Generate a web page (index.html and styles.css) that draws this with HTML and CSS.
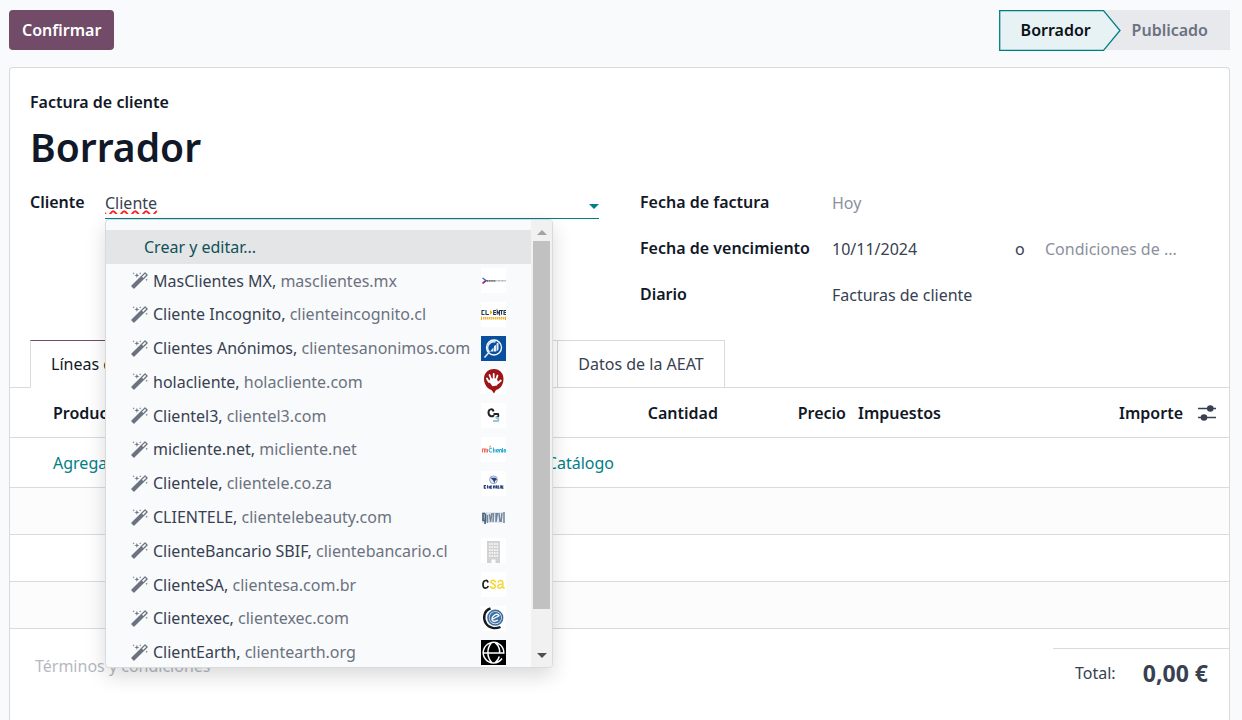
FILE: index.html
```html
<!DOCTYPE html>
<html lang="es">
<head>
<meta charset="utf-8">
<meta name="viewport" content="width=device-width, initial-scale=1">
<title>Factura de cliente</title>
<link rel="stylesheet" href="styles.css">
</head>
<body>
<svg class="defs" aria-hidden="true">
  <symbol id="wand" viewBox="0 0 1664 1664"><path d="M1190 581l293-293-107-107-293 293zm447-293q0 27-18 45l-1286 1286q-18 18-45 18t-45-18l-198-198q-18-18-18-45t18-45l1286-1286q18-18 45-18t45 18l198 198q18 18 18 45zm-1351-190l98 30-98 30-30 98-30-98-98-30 98-30 30-98zm350 162l196 60-196 60-60 196-60-196-196-60 196-60 60-196zm930 478l98 30-98 30-30 98-30-98-98-30 98-30 30-98zm-640-640l98 30-98 30-30 98-30-98-98-30 98-30 30-98z"/></symbol>
</svg>
<header class="control-bar">
  <button class="btn-primary" type="button">Confirmar</button>
  <div class="status">
    <button class="status-step is-current" type="button">
      <svg class="status-shape" width="122" height="41" viewBox="0 0 122 41" aria-hidden="true"><path d="M.7.7H104.500L121 20.500 104.500 40.300H.7z" fill="#e6f2f3" stroke="#017e84" stroke-width="1.300"/></svg>
      <span class="status-text">Borrador</span>
    </button>
    <button class="status-step" type="button">Publicado</button>
  </div>
</header>
<main class="sheet">
  <div class="sheet-top">
    <div class="doc-type">Factura de cliente</div>
    <h1 class="doc-title">Borrador</h1>
    <div class="fields">
      <div class="field-group customer-group">
        <label class="label" for="customer">Cliente</label>
        <div class="combo">
          <input class="combo-input" id="customer" type="text" value="Cliente" spellcheck="false" autocomplete="off">
          <svg class="combo-caret" width="10" height="5" viewBox="0 0 10 5" aria-hidden="true"><path d="M0 0h10L5 5z" fill="#017e84"/></svg>
          <div class="menu">
            <ul class="menu-list">
              <li><a class="option is-create" href="#">Crear y editar...</a></li>
              <li><a class="option" href="#"><svg class="wand"><use href="#wand"/></svg><span>MasClientes MX, <span class="site">masclientes.mx</span></span>
                <svg class="logo" viewBox="0 0 25 25"><path fill="#fff" d="M0 0h25v25H0z"/><path d="M1.500 10l3.500 2.500-3 2.500" fill="none" stroke="#2878b5" stroke-width="1.500"/><path d="M5 12.500l-3.500 3" stroke="#b5128c" stroke-width="1.600"/><path d="M5.500 12.800H14" stroke="#666" stroke-width="1.800" stroke-dasharray="1.500 .4"/><path d="M14 12.800h11" stroke="#aaa" stroke-width="1.500" stroke-dasharray="1 .4"/></svg></a></li>
              <li><a class="option" href="#"><svg class="wand"><use href="#wand"/></svg><span>Cliente Incognito, <span class="site">clienteincognito.cl</span></span>
                <svg class="logo" viewBox="0 0 25 25"><path fill="#fff" d="M0 0h25v25H0z"/><path d="M3.500 8.500H1v4h2.500M5 8v4.500h3M15 8.500h-2.300v4H15M12.700 10.500H15M16.200 12.800V8.500l2.300 4V8M19 8.500h3M20.500 8.500v4.300M25 8.500h-2v4h2M23 10.500h2" fill="none" stroke="#26384f" stroke-width="1.100"/><path d="M9 8l2.500 2.300L9 13z" fill="#f5a81c"/><path d="M.5 14.500v3.500M24.500 14.500v3.500" stroke="#f5a81c"/><path d="M2 16.200h22" stroke="#f5b73c" stroke-width="2.400" stroke-dasharray="1.500 .5"/></svg></a></li>
              <li><a class="option" href="#"><svg class="wand"><use href="#wand"/></svg><span>Clientes Anónimos, <span class="site">clientesanonimos.com</span></span>
                <svg class="logo" viewBox="0 0 25 25"><path fill="#0a4f9e" d="M0 0h25v25H0z"/><circle cx="13" cy="11.500" r="7.500" fill="none" stroke="#fff" stroke-width="1.300"/><path d="M8.500 16a6 6 0 0 1 6-10M7.500 17l-4 4.500" fill="none" stroke="#dfeaf6" stroke-width="1.600"/><path d="M9 15.500l3.500-4v4zM13 15.500v-5.500l2-1v6.500zM15.500 15.500V7.500l2-1v7z" fill="#e5eef8"/></svg></a></li>
              <li><a class="option" href="#"><svg class="wand"><use href="#wand"/></svg><span>holacliente, <span class="site">holacliente.com</span></span>
                <svg class="logo" viewBox="0 0 25 25"><path fill="#fff" d="M0 0h25v25H0z"/><path d="M13 0C6.500 0 3 4.500 3 10c0 6 4 10 7.500 11l2.500 3.500 2-3.500C19 20 22.500 16 22.500 10 22.500 4.500 19 0 13 0z" fill="#9d1519"/><path d="M8 13L5.900 9.500M10.500 11L8.500 6M12.700 10.500V5M15 11l1.500-4.500M17 14l2.800-2.500" stroke="#fff" stroke-width="1.800" stroke-linecap="round"/><path d="M7.500 12l2.500-2.500h5.500l2 4-1.500 3-4.500.8z" fill="#fff"/></svg></a></li>
              <li><a class="option" href="#"><svg class="wand"><use href="#wand"/></svg><span>Clientel3, <span class="site">clientel3.com</span></span>
                <svg class="logo" viewBox="0 0 25 25"><path fill="#fff" d="M0 0h25v25H0z"/><path d="M12.500 8.500C12 5.500 7.500 5.500 7.500 9.500S12 14.500 12.800 12" fill="none" stroke="#222" stroke-width="2"/><path d="M12.500 11h4.500q1.500 3-2 3.500" fill="none" stroke="#222" stroke-width="1.800"/><path d="M14.500 14.500q4 0 2.500 3.500h-5" fill="none" stroke="#98c9d2" stroke-width="2"/></svg></a></li>
              <li><a class="option" href="#"><svg class="wand"><use href="#wand"/></svg><span>micliente.net, <span class="site">micliente.net</span></span>
                <svg class="logo" viewBox="0 0 25 25"><path fill="#fff" d="M0 0h25v25H0z"/><path d="M1.500 15.500v-3.500h2v3.500M3.500 12h1.500v3.500M6.500 12v3.500" fill="none" stroke="#f26a60" stroke-width="1.100"/><path d="M11 11.200q-3-.8-3 2t3 1.800M12.500 10.500v5M14 12v3.500M17.500 15H15.500v-2.500h2V14h-2M18.500 15.500v-3h2v3M21.500 11v4.500M25 15h-2v-2.500h1.500V14H23" fill="none" stroke="#32afd8" stroke-width="1"/><path d="M8 9.500h2" stroke="#f7b84b" stroke-width="1.500"/></svg></a></li>
              <li><a class="option" href="#"><svg class="wand"><use href="#wand"/></svg><span>Clientele, <span class="site">clientele.co.za</span></span>
                <svg class="logo" viewBox="0 0 25 25"><path fill="#fff" d="M0 0h25v25H0z"/><circle cx="12.500" cy="8.800" r="3.900" fill="#e3e9f3" stroke="#8498c0" stroke-width=".9"/><path d="M9.500 6.800h5l1.500 2-2 1-.5 2.500-1.500-3z" fill="#27407d"/><path d="M5 14.700H3.300v2.500H5M6.500 14.300v3.200M8.200 15v2.500M11 17.200H9.500v-2H11M12.500 17.500v-2.500h1.500v2.500M15.500 14.300v3.200M18.500 17.200H17v-2h1.200M19.800 14.300v3.200M22.500 17.200H21v-2h1.300" fill="none" stroke="#27407d" stroke-width="1.200"/></svg></a></li>
              <li><a class="option" href="#"><svg class="wand"><use href="#wand"/></svg><span>CLIENTELE, <span class="site">clientelebeauty.com</span></span>
                <svg class="logo" viewBox="0 0 25 25"><path fill="#e3e8ee" d="M1 7h23v11H1z"/><path d="M4 8.500H2v7h2.500V8.500L4 19" fill="none" stroke="#49617d" stroke-width="1.700"/><path d="M6.500 10v8M8.500 9l1 8 1.500-9M12.500 8l-.5 9M15 8v9l1.500-9M18 8l1 9M21 8l-1 9M23 7v11" fill="none" stroke="#71849a" stroke-width="1.400"/></svg></a></li>
              <li><a class="option" href="#"><svg class="wand"><use href="#wand"/></svg><span>ClienteBancario SBIF, <span class="site">clientebancario.cl</span></span>
                <svg class="logo" viewBox="0 0 25 25"><path fill="#fff" d="M0 0h25v25H0z"/><path d="M6 3h13v22h-4.500v-3.500h-4V25H6z" fill="#d2d2d2"/><path d="M8 6h9.500M8 9h9.500M8 12h9.500M8 15h9.500M8 18h9.500" stroke="#fff" stroke-width="1.600" stroke-dasharray="1.600 .9"/></svg></a></li>
              <li><a class="option" href="#"><svg class="wand"><use href="#wand"/></svg><span>ClienteSA, <span class="site">clientesa.com.br</span></span>
                <svg class="logo" viewBox="0 0 25 25"><path fill="#fff" d="M0 0h25v25H0z"/><path d="M7 10.500Q6.500 8 4.500 8.500 2 9 2 12.500t2.500 3.700Q6.500 16.200 7.300 14" fill="none" stroke="#222" stroke-width="1.700"/><path d="M14.500 10.500Q14 8.300 12 8.300q-2.500.3-2 2.200l4 2.500q1 3-1.800 3.200Q10 16.300 9.500 14" fill="none" stroke="#f4d737" stroke-width="1.500"/><path d="M17 10.500q.5-2.300 2.800-2.100 2 .1 2 2.300v4.500q.4 1 2 .6M21.500 12q-5 .3-4.700 2.600.4 2.500 3.200 1.300l1.500-1.500" fill="none" stroke="#f4d737" stroke-width="1.500"/></svg></a></li>
              <li><a class="option" href="#"><svg class="wand"><use href="#wand"/></svg><span>Clientexec, <span class="site">clientexec.com</span></span>
                <svg class="logo" viewBox="0 0 25 25"><path fill="#fff" d="M0 0h25v25H0z"/><path d="M9.500 2.500C3 4.500 1.500 12 5 17.500c3 5 9.500 5.500 14.500 3.500" fill="none" stroke="#171b20" stroke-width="2.400"/><circle cx="14.300" cy="11.700" r="7.300" fill="#fff" stroke="#3f6fa2" stroke-width="1.600"/><circle cx="14.300" cy="11.700" r="5.900" fill="#3f6fa2"/><path d="M11 13.500l7-3.700q-1.200-2.500-4-1-4 2.700-2.700 5.500 1.700 2 5.700-.3" fill="none" stroke="#fff" stroke-width="1.300"/></svg></a></li>
              <li><a class="option" href="#"><svg class="wand"><use href="#wand"/></svg><span>ClientEarth, <span class="site">clientearth.org</span></span>
                <svg class="logo" viewBox="0 0 25 25"><path d="M0 0h25v25H0z"/><path d="M21 18.500a10.300 10.300 0 1 1 1.800-5.500H2M11 2.300C5.500 8 5.500 17 11 22.800M14 2.300C18.500 6 19 11 18.500 13M14 22.800Q17.500 20 18.300 16.500" fill="none" stroke="#fff" stroke-width="1.500"/></svg></a></li>
            </ul>
            <div class="scrollbar" aria-hidden="true">
              <svg width="10" height="5" viewBox="0 0 10 5"><path d="M0 5h10L5 0z" fill="#a3a3a3"/></svg>
              <div class="scroll-track"><div class="scroll-thumb"></div></div>
              <svg width="10" height="5" viewBox="0 0 10 5"><path d="M0 0h10L5 5z" fill="#505050"/></svg>
            </div>
          </div>
        </div>
      </div>
      <div class="field-group dates-group">
        <label class="label" for="inv-date">Fecha de factura</label>
        <input class="value" id="inv-date" type="text" placeholder="Hoy">
        <label class="label" for="due-date">Fecha de vencimiento</label>
        <div class="due">
          <input class="value" id="due-date" type="text" value="10/11/2024">
          <span class="due-or">o</span>
          <input class="value" type="text" placeholder="Condiciones de ..." aria-label="Condiciones de pago">
        </div>
        <label class="label" for="journal">Diario</label>
        <input class="value" id="journal" type="text" value="Facturas de cliente">
      </div>
    </div>
  </div>
  <nav class="tabs">
    <button class="tab is-active" type="button">Líneas de factura</button>
    <button class="tab tab-wide" type="button">Apuntes contables</button>
    <button class="tab tab-wide" type="button">Otra información</button>
    <button class="tab" type="button">Datos de la AEAT</button>
  </nav>
  <table class="lines">
    <colgroup><col><col class="col-qty"><col class="col-price"><col class="col-tax"><col class="col-amount"><col class="col-opts"></colgroup>
    <thead>
      <tr>
        <th class="first">Producto</th><th class="num">Cantidad</th><th class="num">Precio</th><th>Impuestos</th><th class="num">Importe</th>
        <th><button class="opts" type="button" aria-label="Columnas"><svg width="18" height="16" viewBox="0 0 18 16"><path d="M0 3.500h18M0 12.500h18" stroke="#374151" stroke-width="1.400"/><circle cx="12.300" cy="3.500" r="3.300" fill="#374151"/><circle cx="6" cy="12.500" r="3.300" fill="#374151"/></svg></button></th>
      </tr>
    </thead>
    <tbody>
      <tr class="add-row"><td class="first" colspan="6"><div class="add-links"><a href="#">Agregar línea</a><a href="#">Agregar sección</a><a href="#">Agregar nota</a><a href="#">Catálogo</a></div></td></tr>
      <tr class="alt"><td colspan="6"></td></tr>
      <tr><td colspan="6"></td></tr>
      <tr class="alt"><td colspan="6"></td></tr>
    </tbody>
  </table>
  <div class="summary">
    <textarea class="terms" rows="1" placeholder="Términos y condiciones" aria-label="Términos y condiciones"></textarea>
    <div class="total"><span>Total:</span><strong class="total-value">0,00 €</strong></div>
  </div>
</main>
</body>
</html>
```

FILE: styles.css
```css
* { box-sizing: border-box; }
html { height: 100%; }
body {
  margin: 0;
  height: 100%;
  display: flex;
  flex-direction: column;
  overflow: hidden;
  background: #f9fafb;
  color: #374151;
  font: 16px/24px "Noto Sans", "Open Sans", sans-serif;
}
button, input, textarea { font: inherit; color: inherit; }
button { cursor: pointer; }
a { color: #017e84; text-decoration: none; }
.defs { position: absolute; width: 0; height: 0; }

.control-bar {
  display: flex;
  justify-content: space-between;
  align-items: center;
  padding: 10px 12px 17px 9px;
}
.btn-primary {
  height: 40px;
  padding: 0 13px;
  border: 0;
  border-radius: 4px;
  background: #714b67;
  color: #fff;
  font-weight: 600;
}
.status { display: flex; }
.status-step {
  position: relative;
  height: 40px;
  padding: 0 22px 0 28px;
  border: 0;
  background: #e7e9ed;
  color: #6b7280;
  font-weight: 600;
}
.status-step.is-current { width: 105px; padding: 0 0 0 22px; color: #0b1118; text-align: left; z-index: 1; }
.status-shape { position: absolute; left: 0; top: 0; }
.status-text { position: relative; }

.sheet {
  flex: 1 0 auto;
  margin: 0 12px 0 9px;
  border: 1px solid #d8dadd;
  border-bottom: 0;
  border-radius: 4px 4px 0 0;
  background: #fff;
}
.sheet-top { padding: 22px 20px 0; }
.doc-type { color: #111827; font-weight: 600; }
.doc-title { margin: 5px 0 0; color: #111827; font-size: 39px; line-height: 56px; font-weight: 600; }
.fields { display: grid; grid-template-columns: 569px 1fr; column-gap: 41px; margin-top: 12px; }
.field-group { display: grid; align-content: start; }
.customer-group { grid-template-columns: 75px 1fr; }
.dates-group { grid-template-columns: 192px 1fr; row-gap: 16px; }
.label { color: #111827; font-weight: 600; line-height: 30px; }
.value { width: 100%; height: 30px; padding: 2px 0 0; border: 0; background: none; outline: 0; }
.value::placeholder { color: #8b919c; opacity: 1; }
.due { display: grid; grid-template-columns: 183px 30px 150px; }
.due-or { line-height: 32px; height: 30px; }

.combo { position: relative; }
.combo-input {
  display: block;
  width: 100%;
  height: 32px;
  padding: 2px 20px 2px 0;
  border: 0;
  border-bottom: 1px solid #017e84;
  background: none;
  outline: 0;
  text-decoration: underline wavy #f22 2px;
  text-underline-offset: 1px;
}
.combo-caret { position: absolute; right: 0; top: 17px; }
.menu {
  position: absolute;
  left: 0;
  top: 32px;
  z-index: 5;
  width: 448px;
  height: 449px;
  display: flex;
  overflow: hidden;
  border: 1px solid #d8dadd;
  border-radius: 4px;
  background: #f9fafb;
  box-shadow: 0 8px 20px rgba(0, 0, 0, .15);
}
.menu-list {
  flex: 1;
  height: 449px;
  margin: 0;
  padding: 10px 0 0;
  list-style: none;
  display: grid;
  grid-template-rows: repeat(13, 1fr);
}
.option { display: flex; align-items: center; height: 100%; padding: 0 25px; color: #374151; white-space: nowrap; }
.option.is-create { padding-left: 38px; background: #e4e5e7; color: #0f5257; }
.site { color: #6b7280; }
.wand { width: 17px; height: 17px; margin-right: 5px; fill: #6b7280; }
.logo { width: 25px; height: 25px; margin-left: auto; }
.scrollbar { width: 21px; padding: 10px 0 9px; display: flex; flex-direction: column; align-items: center; gap: 6px; background: #f1f1f1; }
.scrollbar svg { flex: none; }
.scroll-track { flex: 1; width: 17px; }
.scroll-thumb { height: 368px; background: #c1c1c1; }

.tabs { display: flex; margin-top: 31px; padding-left: 20px; border-bottom: 1px solid #d8dadd; }
.tab {
  height: 48px;
  margin-bottom: -1px;
  padding: 0 20px;
  border: 1px solid #d8dadd;
  border-left-width: 0;
  background: #fff;
}
.tab-wide { padding: 0 22px; }
.tab.is-active { border-left-width: 1px; border-top-color: #714b67; border-bottom-color: #fff; color: #111827; }

.lines { width: 100%; border-spacing: 0; table-layout: fixed; }
.col-qty, .col-price { width: 128px; }
.col-tax { width: 208px; }
.col-amount { width: 129px; }
.col-opts { width: 40px; }
.lines th, .lines td { height: 47px; padding: 0 6px; border-bottom: 1px solid #d8dadd; text-align: left; }
.lines th { height: 50px; color: #111827; font-weight: 600; }
.lines .add-row td { height: 50px; }
.lines .first { padding-left: 43px; }
.lines .num { text-align: right; }
.alt { background: #fcfcfc; }
.opts { display: block; padding: 0; margin-left: 3px; border: 0; background: none; line-height: 0; }
.add-links { display: flex; justify-content: space-between; width: 561px; }

.summary { display: flex; justify-content: space-between; align-items: flex-start; padding: 19px 0 0 25px; }
.terms { width: 400px; height: 40px; padding: 6px 0; border: 0; background: none; resize: none; outline: 0; }
.terms::placeholder { color: #b6b9bf; opacity: 1; }
.total { display: flex; justify-content: space-between; align-items: center; width: 176px; padding: 8px 21px 0 22px; border-top: 1px solid #d8dadd; }
.total-value { font-size: 23px; line-height: 32px; font-weight: 700; }
```
